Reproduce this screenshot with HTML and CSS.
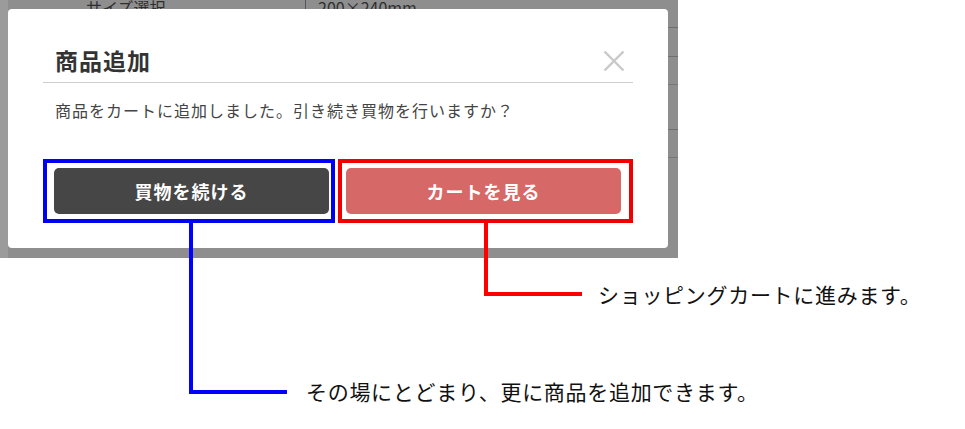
FILE: index.html
```html
<!DOCTYPE html>
<html lang="ja">
<head>
    <meta charset="UTF-8">
    <meta name="viewport" content="width=device-width, initial-scale=1.0">
    <title>カート追加ダイアログの説明</title>
    <link rel="stylesheet" href="styles.css">
</head>
<body>
    <div class="sheet">
        <div class="screen">
            <div class="peek">
                <span class="peek-label">サイズ選択</span>
                <span class="peek-value">200×240mm</span>
            </div>
            <div class="modal">
                <div class="modal-header">
                    <h2>商品追加</h2>
                    <span class="close" aria-label="閉じる">
                        <svg width="22" height="20" viewBox="0 0 22 20">
                            <path d="M1.5 0.5 L20.5 19.5 M20.5 0.5 L1.5 19.5" stroke="#c9c9c9" stroke-width="2.4" fill="none"/>
                        </svg>
                    </span>
                </div>
                <p class="message">商品をカートに追加しました。引き続き買物を行いますか？</p>
                <div class="actions">
                    <div class="mark mark-blue">
                        <button class="btn btn-dark">買物を続ける</button>
                    </div>
                    <div class="mark mark-red">
                        <button class="btn btn-red">カートを見る</button>
                    </div>
                </div>
            </div>
        </div>

        <!-- callouts -->
        <div class="callout callout-red">
            <div class="elbow"></div>
            <span class="note">ショッピングカートに進みます。</span>
        </div>
        <div class="callout callout-blue">
            <div class="elbow"></div>
            <span class="note">その場にとどまり、更に商品を追加できます。</span>
        </div>
    </div>
</body>
</html>
```

FILE: styles.css
```css
* {
    box-sizing: border-box;
    margin: 0;
    padding: 0;
}
body {
    font-family: 'Noto Sans CJK JP', 'Noto Sans', sans-serif;
    background-color: #fff;
    color: #333;
}
.sheet {
    position: relative;
    width: 965px;
    height: 429px;
}
.screen {
    width: 678px;
    height: 258px;
    padding: 0 10px 10px 8px;
    background:
        linear-gradient(#6f6f6f, #6f6f6f) 668px 27px / 10px 1px no-repeat,
        linear-gradient(#6f6f6f, #6f6f6f) 668px 56px / 10px 1px no-repeat,
        linear-gradient(#777, #777) 668px 84px / 10px 1px no-repeat,
        linear-gradient(#6f6f6f, #6f6f6f) 668px 129px / 10px 1px no-repeat,
        linear-gradient(#777, #777) 668px 157px / 10px 1px no-repeat,
        linear-gradient(#9b9b9b, #9b9b9b) 0 0 / 8px 100% no-repeat,
        #8e8e8e;
}
.peek {
    height: 9px;
    overflow: hidden;
    display: flex;
    font-size: 16px;
    line-height: 14px;
    color: #2e2e2e;
}
.peek-label {
    width: 297px;
    padding-left: 78px;
}
.peek-value {
    border-left: 1px solid #555;
    padding-left: 12px;
}
.modal {
    background-color: #fff;
    border-radius: 4px;
    padding: 0 35px 25px;
}
.modal-header {
    display: flex;
    justify-content: space-between;
    align-items: center;
    padding: 36px 8px 7px 12px;
    border-bottom: 1px solid #cfcfcf;
}
.modal-header h2 {
    font-size: 23px;
    line-height: 30px;
    letter-spacing: 1px;
    font-weight: bold;
    color: #333;
}
.close {
    display: flex;
    margin-top: 2px;
}
.message {
    padding: 15px 0 0 12px;
    font-size: 16px;
    line-height: 24px;
    letter-spacing: 1px;
    color: #444;
}
.actions {
    display: grid;
    grid-template-columns: 292px 295px;
    gap: 3px;
    margin-top: 37px;
}
.mark {
    display: flex;
    border: 4px solid;
    padding: 5px 0;
}
.mark-blue {
    border-color: #0000f2;
    padding-left: 7px;
}
.mark-red {
    border-color: #f20000;
    padding-left: 4px;
}
.btn {
    width: 275px;
    height: 46px;
    border: none;
    border-radius: 5px;
    font-family: inherit;
    font-size: 18px;
    font-weight: bold;
    letter-spacing: 1px;
    color: #fff;
}
.btn-dark {
    background-color: #464646;
}
.btn-red {
    background-color: #d66868;
}
.callout {
    position: absolute;
    top: 223px;
    display: flex;
}
.elbow {
    border-left: 4px solid;
    border-bottom: 4px solid;
}
.note {
    align-self: flex-end;
    font-size: 21px;
    line-height: 24px;
    letter-spacing: 0.7px;
    color: #111;
    white-space: nowrap;
}
.callout-red {
    left: 484px;
}
.callout-red .elbow {
    width: 98px;
    height: 73px;
    border-color: #ff0000;
}
.callout-red .note {
    margin: 0 0 -10px 16px;
}
.callout-blue {
    left: 189px;
}
.callout-blue .elbow {
    width: 98px;
    height: 171px;
    border-color: #0000ff;
}
.callout-blue .note {
    margin: 0 0 -9px 19px;
}
```
